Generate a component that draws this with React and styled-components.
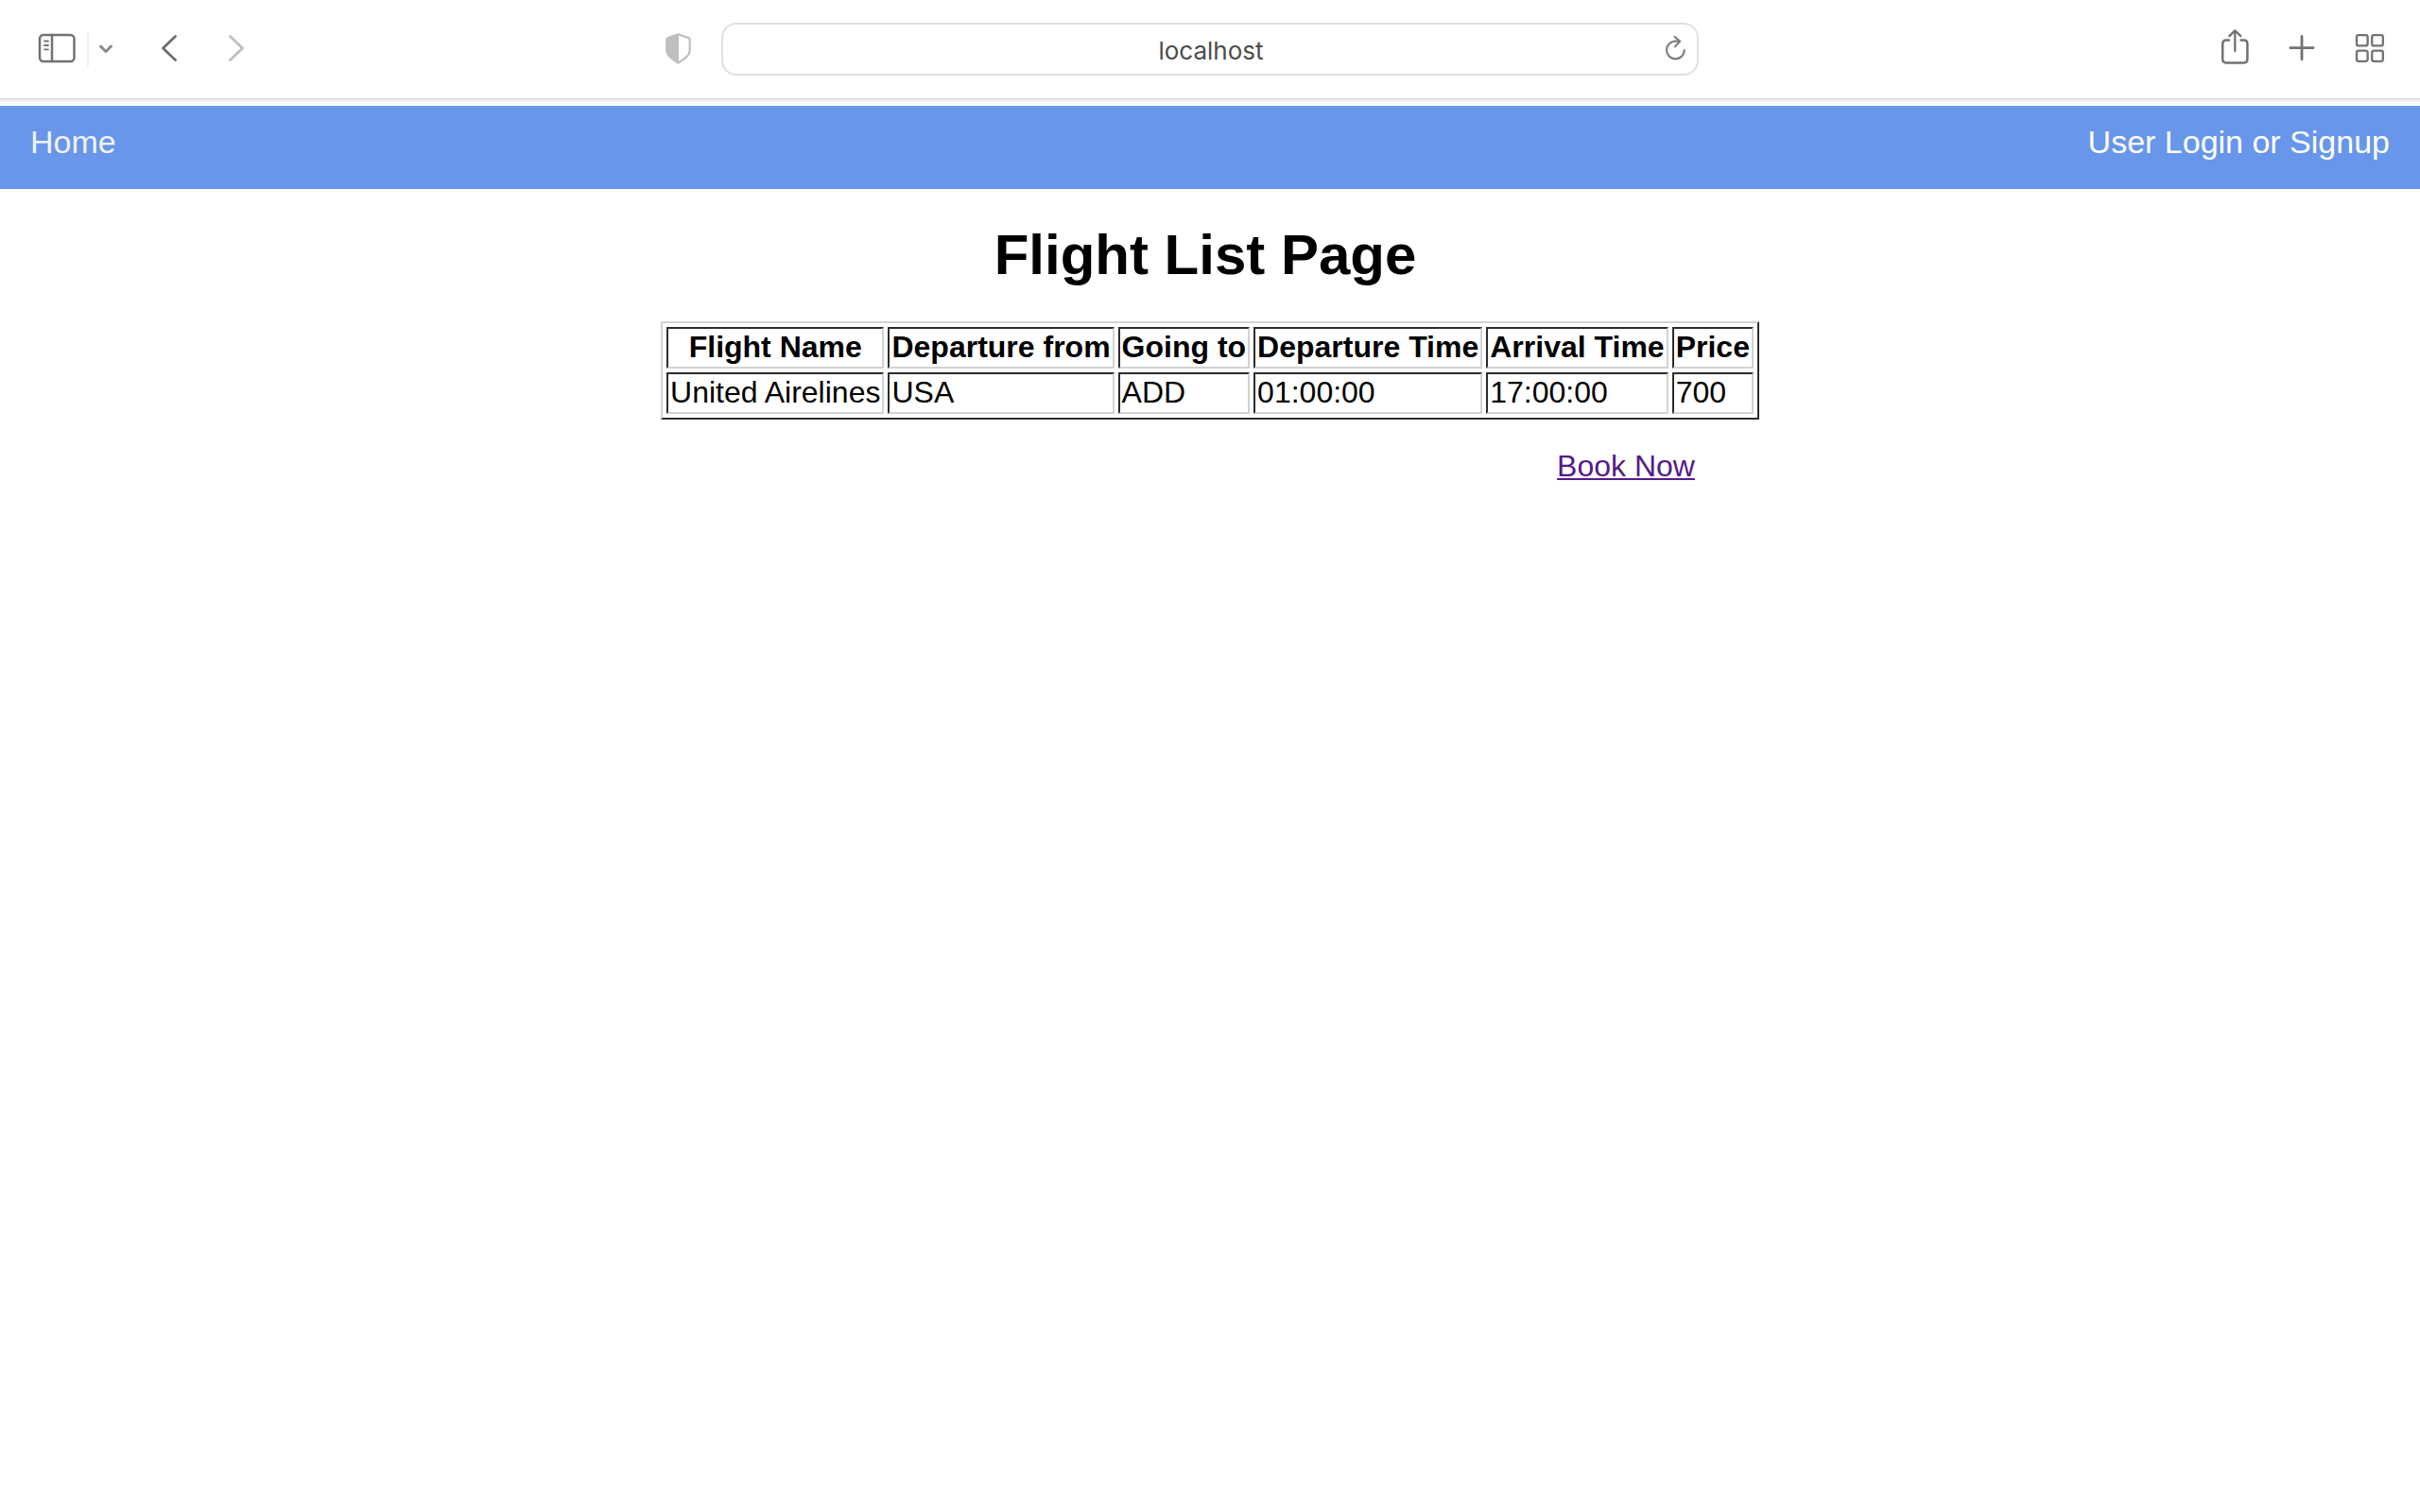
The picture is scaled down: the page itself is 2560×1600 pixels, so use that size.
import React from "react";
import styled, { createGlobalStyle } from "styled-components";

const GlobalStyle = createGlobalStyle`
  *, *::before, *::after { box-sizing: border-box; }
  body {
    margin: 0;
    background: #fff;
    color: #000;
    font-family: "Liberation Sans", Arial, Helvetica, sans-serif;
    font-size: 32px;
    line-height: 36px;
  }
`;

const Toolbar = styled.header`
  display: grid;
  grid-template-columns: 1fr minmax(300px, 1034px) 1fr;
  align-items: center;
  height: 104px;
  background: #fff;
`;

const ToolGroup = styled.div`
  display: flex;
  align-items: center;
  gap: ${(p) => p.$gap || 0}px;
`;

const LeftTools = styled(ToolGroup)`
  justify-content: space-between;
  padding: 0 31px 0 40px;
`;

const RightTools = styled(ToolGroup)`
  justify-content: flex-end;
  padding-right: 37px;
`;

const IconButton = styled.button`
  display: block;
  padding: 0;
  border: 0;
  background: none;
  color: ${(p) => p.$color || "#727272"};
  line-height: 0;
`;

const Glyph = styled.svg`
  display: block;
  fill: none;
  stroke: currentColor;
  stroke-width: 2.5;
  stroke-linecap: round;
  stroke-linejoin: round;
`;

const Divider = styled.span`
  width: 2px;
  height: 36px;
  background: #efefef;
`;

const AddressBar = styled.form`
  display: grid;
  grid-template-columns: 40px 1fr 38px;
  align-items: center;
  height: 56px;
  border: 2px solid #e0e0e0;
  border-radius: 16px;
`;

const AddressInput = styled.input`
  grid-column: 2;
  width: 100%;
  padding: 4px 0 0;
  border: 0;
  outline: 0;
  background: none;
  color: #4c4c4c;
  font: 26px/36px Inter, Roboto, sans-serif;
  text-align: center;
`;

const ToolbarEdge = styled.div`
  height: 8px;
  border-top: 1px solid #d9d9d9;
  background: linear-gradient(#e9e9e9, #fff 80%);
`;

const NavBar = styled.nav`
  display: flex;
  justify-content: space-between;
  height: 88px;
  padding: 20px 32px;
  background: #6796ea;
`;

const NavLink = styled.a`
  color: ${(p) => p.$color};
  font-size: 34px;
  text-decoration: none;
`;

const Page = styled.main`
  display: flex;
  flex-direction: column;
  align-items: center;
  padding-top: 36px;
`;

const Title = styled.h1`
  margin: 0 10px 36px 0;
  font-size: 60px;
  line-height: 68px;
`;

const Listing = styled.section`
  display: flex;
  flex-direction: column;
`;

const FlightTable = styled.table`
  border: 2px solid;
  border-color: #d3d3d3 #2c2c2c #2c2c2c #d3d3d3;
  border-collapse: separate;
  border-spacing: 4px;

  th, td {
    padding: 1px 2px 3px;
    border: 2px solid;
    border-color: #2c2c2c #d3d3d3 #d3d3d3 #2c2c2c;
    white-space: nowrap;
  }
  td { text-align: left; }
`;

const BookLink = styled.a`
  align-self: flex-end;
  margin: 31px 68px 0 0;
  color: #551a8b;
  text-decoration: underline;
  text-decoration-thickness: 2px;
  text-underline-offset: 2px;
  text-decoration-skip-ink: none;
`;

function Icon({ width, children }) {
  return (
    <Glyph width={width} height="44" viewBox={`0 0 ${width} 44`} aria-hidden="true">
      {children}
    </Glyph>
  );
}

const columns = ["Flight Name", "Departure from", "Going to", "Departure Time", "Arrival Time", "Price"];
const flights = [["United Airelines", "USA", "ADD", "01:00:00", "17:00:00", "700"]];

export default function App() {
  return (
    <>
      <GlobalStyle />
      <Toolbar>
        <LeftTools>
          <ToolGroup $gap={51}>
            <ToolGroup $gap={10}>
              <IconButton aria-label="Sidebar">
                <Icon width={42}>
                  <rect x="2" y="7" width="36.5" height="28" rx="4" />
                  <path d="M15 7v28" />
                  <path d="M7 13.5h4M7 18h4M7 22.3h4" strokeWidth="1.8" />
                </Icon>
              </IconButton>
              <Divider />
              <IconButton aria-label="Tab groups" $color="#8a8a8a">
                <Icon width={16}>
                  <path d="M2.5 19l5.5 5.5 5.5-5.5" strokeWidth="3" />
                </Icon>
              </IconButton>
            </ToolGroup>
            <IconButton aria-label="Back" $color="#6e6e6e">
              <Icon width={18}>
                <path d="M14.5 8.5L1.5 21l13 12.5" strokeWidth="2.8" />
              </Icon>
            </IconButton>
            <IconButton aria-label="Forward" $color="#bfbfbf">
              <Icon width={18}>
                <path d="M3.5 8.5l13 12.5-13 12.5" strokeWidth="2.8" />
              </Icon>
            </IconButton>
          </ToolGroup>
          <IconButton aria-label="Privacy report" $color="#bfbfbf">
            <Icon width={29}>
              <path d="M14.5 6.2l11.3 4.2q.9.4.9 1.4v11.5q0 4-3.6 7-3.6 3-8.6 6.2-5-3.2-8.6-6.2-3.6-3-3.6-7V11.8q0-1 .9-1.4z" strokeWidth="2.2" />
              <path d="M15 6.2L3.2 10.4q-.9.4-.9 1.4v11.5q0 4 3.6 7 3.6 3 9.1 6.2z" fill="currentColor" stroke="none" />
            </Icon>
          </IconButton>
        </LeftTools>
        <AddressBar onSubmit={(e) => e.preventDefault()}>
          <AddressInput aria-label="Address" defaultValue="localhost" />
          <IconButton type="button" aria-label="Reload" $color="#808080">
            <Icon width={28}>
              <path d="M24.8 23a9.4 9.4 0 1 1-9.4-9.4h4.6" strokeWidth="2.2" />
              <path d="M14.6 9l5.6 4.8-5.2 5.4" strokeWidth="2.2" />
            </Icon>
          </IconButton>
        </AddressBar>
        <RightTools $gap={40}>
          <IconButton aria-label="Share">
            <Icon width={31}>
              <path d="M10 12.6H6q-3.8 0-3.8 3.8v16.2q0 3.8 3.8 3.8h18.6q3.8 0 3.8-3.8V16.4q0-3.8-3.8-3.8h-4" strokeLinecap="butt" />
              <path d="M15.3 24V2.8M9.3 8.2l6-5.8 6 5.8" strokeWidth="2.3" />
            </Icon>
          </IconButton>
          <IconButton aria-label="New tab">
            <Icon width={31}>
              <path d="M15 8.4v24.4M2.8 20.6h24.4" strokeWidth="2.8" />
            </Icon>
          </IconButton>
          <IconButton aria-label="Tab overview">
            <Icon width={32}>
              <rect x="2" y="7.2" width="11.6" height="11.2" rx="2" strokeWidth="2.3" />
              <rect x="18.2" y="7.2" width="11.6" height="11.2" rx="2" strokeWidth="2.3" />
              <rect x="2" y="23.6" width="11.6" height="11.2" rx="2" strokeWidth="2.3" />
              <rect x="18.2" y="23.6" width="11.6" height="11.2" rx="2" strokeWidth="2.3" />
            </Icon>
          </IconButton>
        </RightTools>
      </Toolbar>
      <ToolbarEdge />
      <NavBar>
        <NavLink href="#home" $color="#f2f2f2">Home</NavLink>
        <NavLink href="#login" $color="#ffffff">User Login or Signup</NavLink>
      </NavBar>
      <Page>
        <Title>Flight List Page</Title>
        <Listing>
          <FlightTable>
            <thead>
              <tr>{columns.map((c) => <th key={c} scope="col">{c}</th>)}</tr>
            </thead>
            <tbody>
              {flights.map((row) => (
                <tr key={row[0]}>{row.map((v) => <td key={v}>{v}</td>)}</tr>
              ))}
            </tbody>
          </FlightTable>
          <BookLink href="#book">Book Now</BookLink>
        </Listing>
      </Page>
    </>
  );
}
